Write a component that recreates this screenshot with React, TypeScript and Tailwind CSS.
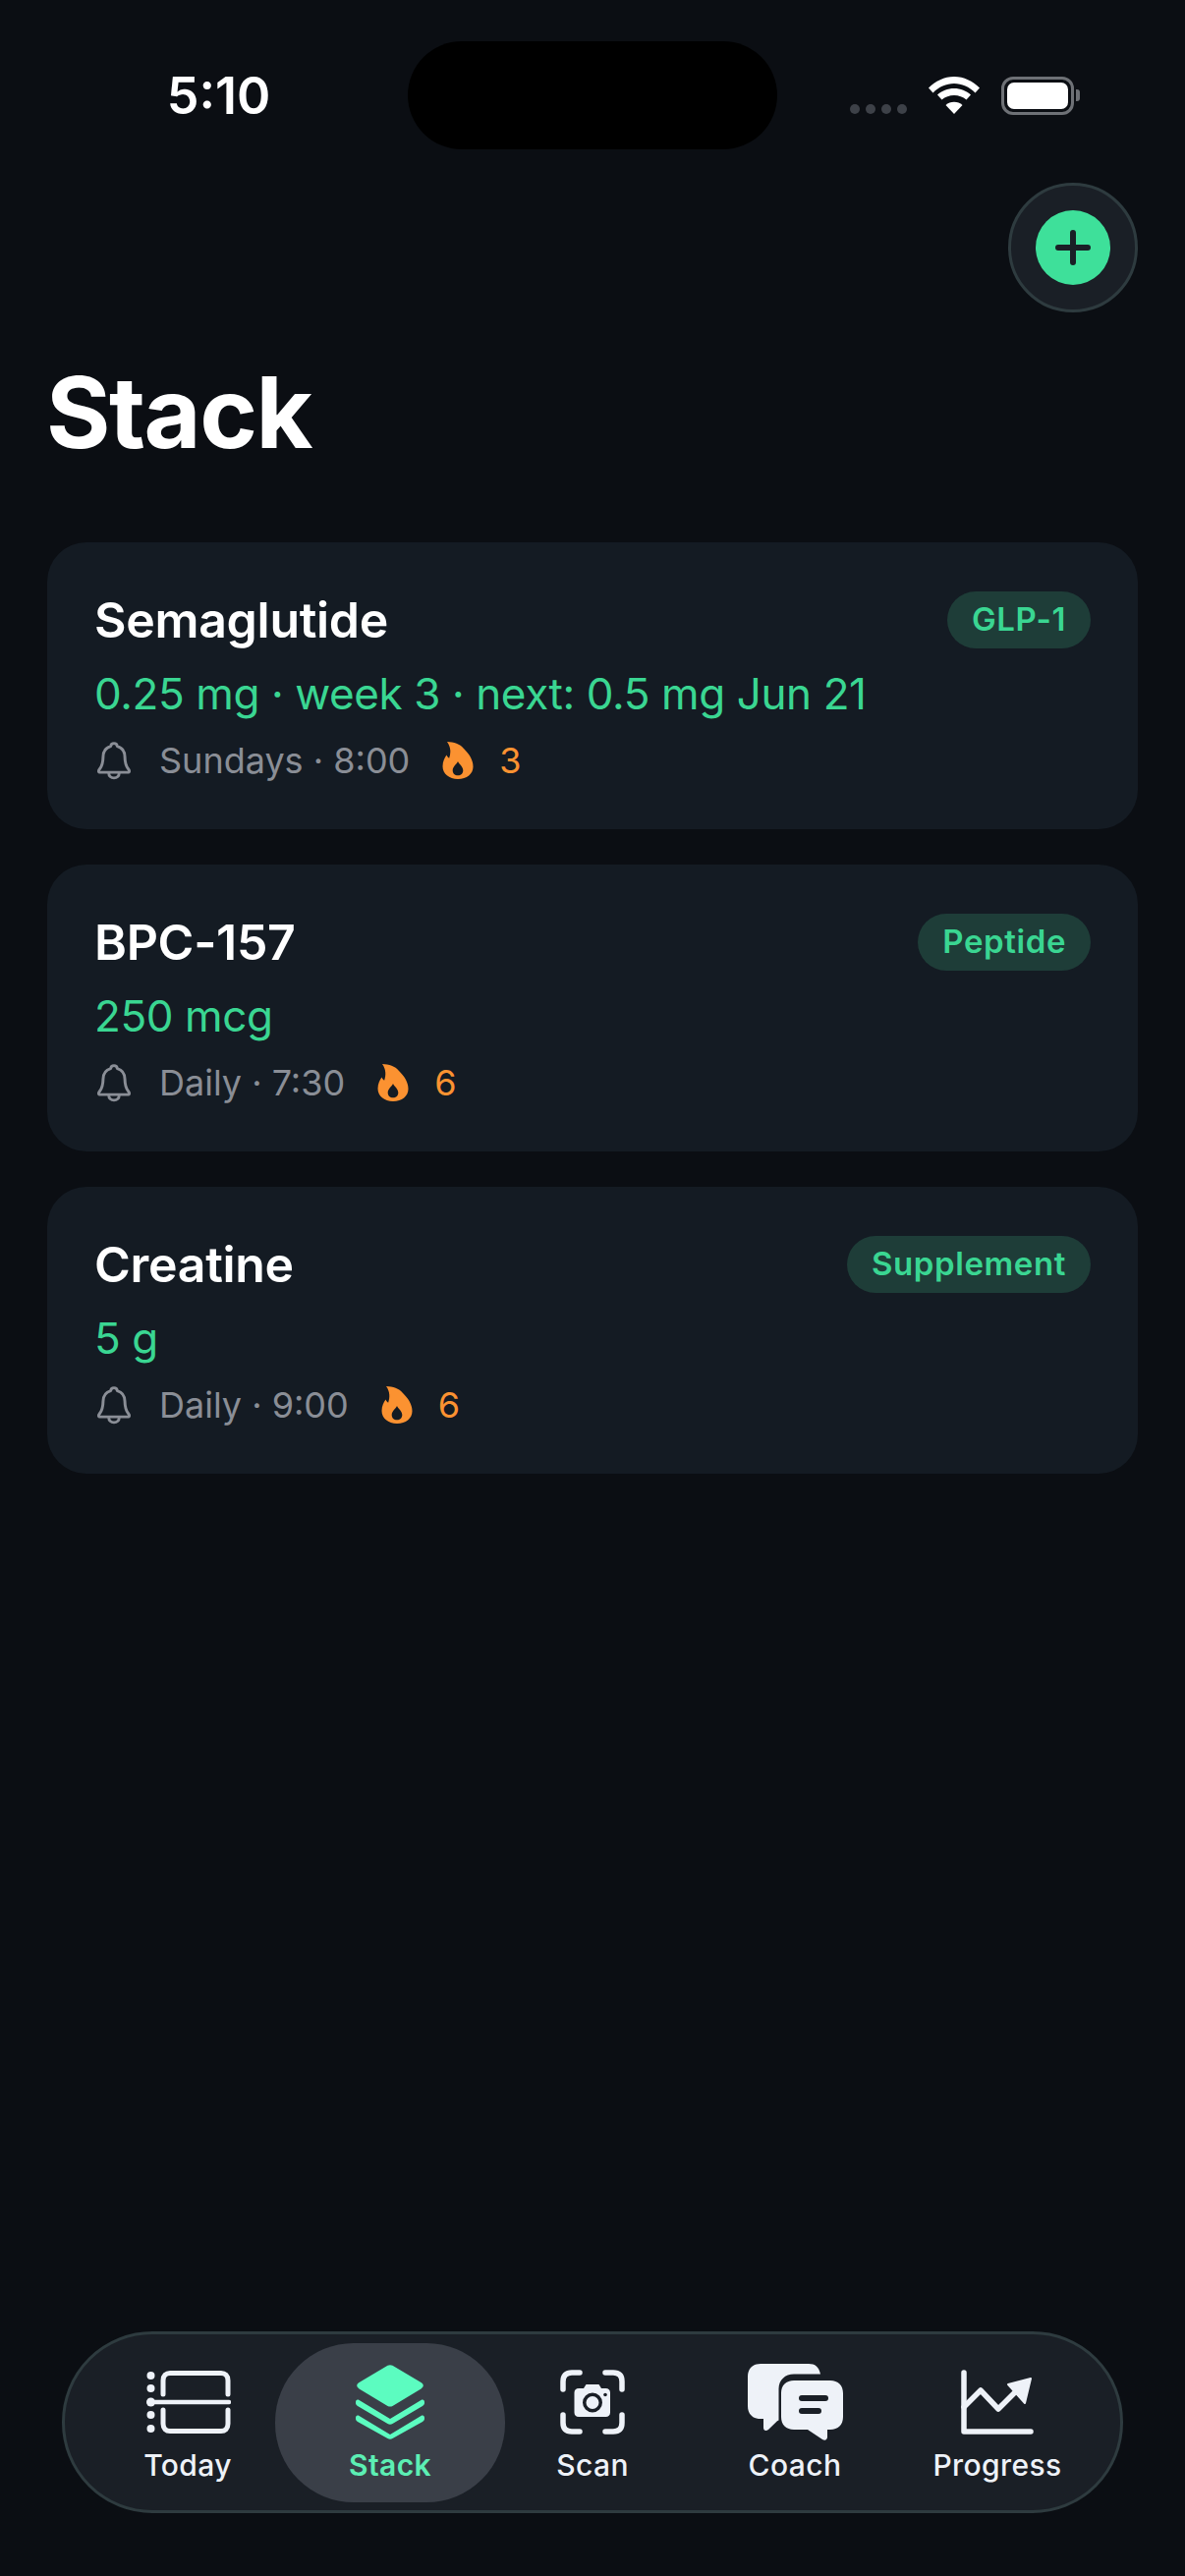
import React from 'react';

const medications = [
  { name: 'Semaglutide', tag: 'GLP-1', dose: '0.25 mg · week 3 · next: 0.5 mg Jun 21', schedule: 'Sundays · 8:00', streak: 3 },
  { name: 'BPC-157', tag: 'Peptide', dose: '250 mcg', schedule: 'Daily · 7:30', streak: 6 },
  { name: 'Creatine', tag: 'Supplement', dose: '5 g', schedule: 'Daily · 9:00', streak: 6 },
];

const BellIcon = () => (
  <svg viewBox="0 0 36 38" className="w-[38px] h-[40px] shrink-0" fill="none" stroke="#8a8e96" strokeWidth="2.8" strokeLinejoin="round" strokeLinecap="round">
    <path d="M18 2.5c-1.8 0-3 1.2-3.2 2.9C9.900 6.800 7.600 10.500 7.500 15.500c-.1 5.500-.9 8.800-3.200 11.600-1.600 1.900-1.600 3.400.6 3.400h26.200c2.200 0 2.200-1.500.6-3.400-2.300-2.800-3.100-6.100-3.200-11.600-.1-5-2.400-8.700-7.300-10.100C21 3.700 19.800 2.500 18 2.500z" />
    <path d="M13 31c0 3.200 2.200 5 5 5s5-1.800 5-5" />
  </svg>
);

const FlameIcon = () => (
  <svg viewBox="0 0 32 38" className="w-[32px] h-[38px] shrink-0">
    <path
      fill="#fb9231"
      fillRule="evenodd"
      d="M5 0c7 .5 13 2 17 7 5 5 9.500 11 9.500 18.500C31.500 32.500 25 38 16 38 7 38 .5 32.500.5 25c0-5 2-8.500 4-11.500.6 1.300 1.300 2.400 2.600 3.200C9 11.500 9 5.500 5 0zM16 20c-1 2.800-5.300 5-5.300 9.300 0 3 2.300 5 5.300 5s5.300-2 5.300-5c0-4.300-4.300-6.500-5.300-9.300z"
    />
  </svg>
);

const WifiIcon = () => (
  <svg viewBox="0 0 52 38" className="w-[52px] h-[38px]" fill="#ffffff">
    <path d="M0 11.500C7 4.500 16 0 26 0s19 4.500 26 11.500l-4.500 5C41.500 10.500 34 7 26 7S10.500 10.500 4.500 16.500z" />
    <path d="M9 18.500C13.500 14.500 19.500 12 26 12s12.500 2.500 17 6.500l-4.500 5C35 20.500 30.700 19 26 19s-9 1.500-12.500 4.500z" />
    <path d="M17.500 29c2.300-2 5.300-3.200 8.500-3.200s6.200 1.200 8.500 3.200L26 38z" />
  </svg>
);

const TodayIcon = () => (
  <svg viewBox="0 0 86 64" className="w-[86px] h-[64px] ml-[2px]" fill="none" stroke="#eef2f8" strokeWidth="5" strokeLinecap="round">
    <path d="M17 24V10c0-5 3-7.500 7-7.500h52c4 0 7 2.500 7 7.500v14" />
    <path d="M17 40v14c0 5 3 7.500 7 7.500h52c4 0 7-2.500 7-7.500V40" />
    <path d="M4 32h80" strokeWidth="4.500" />
    <g fill="#eef2f8" stroke="none">
      <circle cx="4.500" cy="5" r="4" />
      <circle cx="4.500" cy="18" r="4" />
      <circle cx="4.500" cy="32" r="4.500" />
      <circle cx="4.500" cy="45" r="4" />
      <circle cx="4.500" cy="59" r="4" />
    </g>
  </svg>
);

const StackIcon = () => (
  <svg viewBox="0 0 70 76" className="w-[70px] h-[76px]" fill="#5cfcc0">
    <path d="M32.500.8c1.600-.8 3.400-.8 5 0l29 17.300c3 1.800 3 4.500 0 6.300l-29 17.500c-1.600.9-3.400.9-5 0l-29-17.500c-3-1.800-3-4.500 0-6.300z" />
    <path d="M3.500 36l31.500 19 31.500-19c2-1.100 3.500 0 3.500 2v.8c0 1.400-.6 2.400-2 3.200L37.500 60c-1.600.9-3.400.9-5 0L2 42c-1.400-.8-2-1.800-2-3.200V38c0-2 1.500-3.100 3.500-2z" />
    <path d="M3.500 52l31.500 19 31.500-19c2-1.100 3.500 0 3.500 2v.8c0 1.400-.6 2.400-2 3.200L37.500 75c-1.600.9-3.400.9-5 0L2 58c-1.400-.8-2-1.800-2-3.200V54c0-2 1.500-3.100 3.500-2z" />
  </svg>
);

const ScanIcon = () => (
  <svg viewBox="0 0 66 66" className="w-[66px] h-[66px]" fill="none" stroke="#eef2f8" strokeWidth="5.500" strokeLinecap="round">
    <path d="M3 20V12c0-6 3-9 9-9h8" />
    <path d="M46 3h8c6 0 9 3 9 9v8" />
    <path d="M3 46v8c0 6 3 9 9 9h8" />
    <path d="M46 63h8c6 0 9-3 9-9v-8" />
    <path
      fill="#eef2f8"
      stroke="none"
      fillRule="evenodd"
      d="M19 19h5l2.500-4h13l2.500 4h4.500c2.800 0 4.500 1.700 4.500 4.500v20c0 2.800-1.700 4.500-4.500 4.500H19c-2.800 0-4.500-1.700-4.500-4.500v-20c0-2.800 1.700-4.500 4.500-4.500zM33 23.500a10 10 0 1 0 0 20 10 10 0 0 0 0-20zM33 27a6.500 6.500 0 1 1 0 13 6.500 6.500 0 0 1 0-13z"
    />
    <circle cx="46" cy="25.500" r="1.800" fill="#1a1f26" stroke="none" />
  </svg>
);

const CoachIcon = () => (
  <svg viewBox="0 0 97 78" className="w-[97px] h-[78px]">
    <path
      fill="#eef2f8"
      d="M13 0h49c6.500 0 10.500 3 12 10.500H47c-9 0-15.500 6-15.500 15v32l-1.500.8L21 67c-2.500 2-5 1-5-2v-9h-3C5 56 0 51 0 43V13C0 5 5 0 13 0z"
    />
    <path
      fill="#eef2f8"
      d="M47 17h37c8 0 13 5 13 13v24c0 8-5 13-13 13h-3v7.500c0 3-2.500 4-5 2.500L61 67H47c-8 0-13-5-13-13V30c0-8 5-13 13-13z"
    />
    <rect x="52" y="32" width="30" height="6" rx="3" fill="#1a1f26" />
    <rect x="52" y="45" width="23" height="6" rx="3" fill="#1a1f26" />
  </svg>
);

const ProgressIcon = () => (
  <svg viewBox="0 0 74 66" className="w-[74px] h-[66px]" fill="none" stroke="#eef2f8" strokeWidth="5.500" strokeLinecap="round" strokeLinejoin="round">
    <path d="M3 3v60h68" />
    <path d="M3 38l17-17 18 19 21-21" />
    <path d="M48 15l23-6-6 25z" fill="#eef2f8" strokeWidth="2" />
  </svg>
);

const tabs = [
  { label: 'Today', icon: <TodayIcon /> },
  { label: 'Stack', icon: <StackIcon />, active: true },
  { label: 'Scan', icon: <ScanIcon /> },
  { label: 'Coach', icon: <CoachIcon /> },
  { label: 'Progress', icon: <ProgressIcon /> },
];

export default function App() {
  return (
    <div className="w-[1206px] h-[2622px] bg-[#0b0e13] flex flex-col font-['Inter',sans-serif] overflow-hidden">
      {/* status bar */}
      <div className="h-[186px] shrink-0 flex items-start pt-[42px]">
        <div className="w-[415px] h-[110px] flex items-center justify-center pl-[30px] pt-[2px]">
          <span className="text-white text-[52px] font-semibold leading-none">5:10</span>
        </div>
        <div className="w-[376px] h-[110px] rounded-[55px] bg-black" />
        <div className="flex-1 h-[110px] flex items-center pl-[74px] gap-[22px]">
          <div className="flex gap-[6px] self-end mb-[36px]">
            <span className="w-[10px] h-[10px] rounded-full bg-[#3d4148]" />
            <span className="w-[10px] h-[10px] rounded-full bg-[#3d4148]" />
            <span className="w-[10px] h-[10px] rounded-full bg-[#3d4148]" />
            <span className="w-[10px] h-[10px] rounded-full bg-[#3d4148]" />
          </div>
          <WifiIcon />
          <div className="flex items-center gap-[2px]">
            <div className="w-[74px] h-[39px] rounded-[12px] border-[3px] border-[#6e7176] p-[3px]">
              <div className="w-full h-full rounded-[7px] bg-white" />
            </div>
            <div className="w-[4px] h-[12px] rounded-r-[3px] bg-[#6e7176]" />
          </div>
        </div>
      </div>

      <div className="px-[48px] flex flex-col flex-1">
        <div className="flex justify-end">
          <button className="w-[132px] h-[132px] rounded-full bg-[#1a1f26] border-[3px] border-[#2e3b3f] flex items-center justify-center">
            <span className="w-[76px] h-[76px] rounded-full bg-[#3ee09a] flex items-center justify-center">
              <svg viewBox="0 0 36 36" className="w-[36px] h-[36px]" fill="none" stroke="#1a1f26" strokeWidth="6" strokeLinecap="round">
                <path d="M18 3v30M3 18h30" />
              </svg>
            </span>
          </button>
        </div>

        <h1 className="text-white text-[100px] font-bold leading-none tracking-[-1.500px] mt-[52px] -ml-[1px]">Stack</h1>

        <div className="flex flex-col gap-[36px] mt-[82px]">
          {medications.map((med) => (
            <div key={med.name} className="h-[292px] rounded-[40px] bg-[#141b23] pt-[50px] pl-[49px] pr-[48px]">
              <div className="flex items-center justify-between h-[58px]">
                <span className="text-white text-[50px] font-semibold leading-none tracking-[-0.300px] -ml-[1px]">{med.name}</span>
                <span className="h-[58px] px-[25px] rounded-full bg-[#1e3d38] text-[#3ad692] text-[33px] font-semibold tracking-[0.600px] flex items-center">{med.tag}</span>
              </div>
              <div className="text-[#3ad692] text-[44px] leading-none tracking-[-0.400px] -ml-[1px] mt-[24px]">{med.dose}</div>
              <div className="flex items-center mt-[26px]">
                <BellIcon />
                <span className="text-[#8a8e96] text-[36px] leading-none ml-[27px]">{med.schedule}</span>
                <span className="ml-[33px] flex"><FlameIcon /></span>
                <span className="text-[#fb9231] text-[36px] leading-none ml-[26px]">{med.streak}</span>
              </div>
            </div>
          ))}
        </div>
      </div>

      {/* tab bar */}
      <div className="px-[63px] pb-[64px] shrink-0">
        <nav className="h-[185px] rounded-[92px] bg-[#1a1f26] border-[3px] border-[#2e3b3f] px-[22px] flex items-stretch">
          {tabs.map((tab) => (
            <div key={tab.label} className="relative flex-1 flex flex-col items-center">
              {tab.active && <div className="absolute top-[9px] -left-[14px] -right-[14px] h-[162px] rounded-[80px] bg-[#3a3f48]" />}
              <div className="relative h-[78px] mt-[30px] flex items-center justify-center">{tab.icon}</div>
              <span className={`relative text-[30px] leading-none mt-[10px] tracking-[0.400px] ${tab.active ? 'text-[#5cefb4] font-semibold' : 'text-[#eef2f8] font-medium'}`}>{tab.label}</span>
            </div>
          ))}
        </nav>
      </div>
    </div>
  );
}
